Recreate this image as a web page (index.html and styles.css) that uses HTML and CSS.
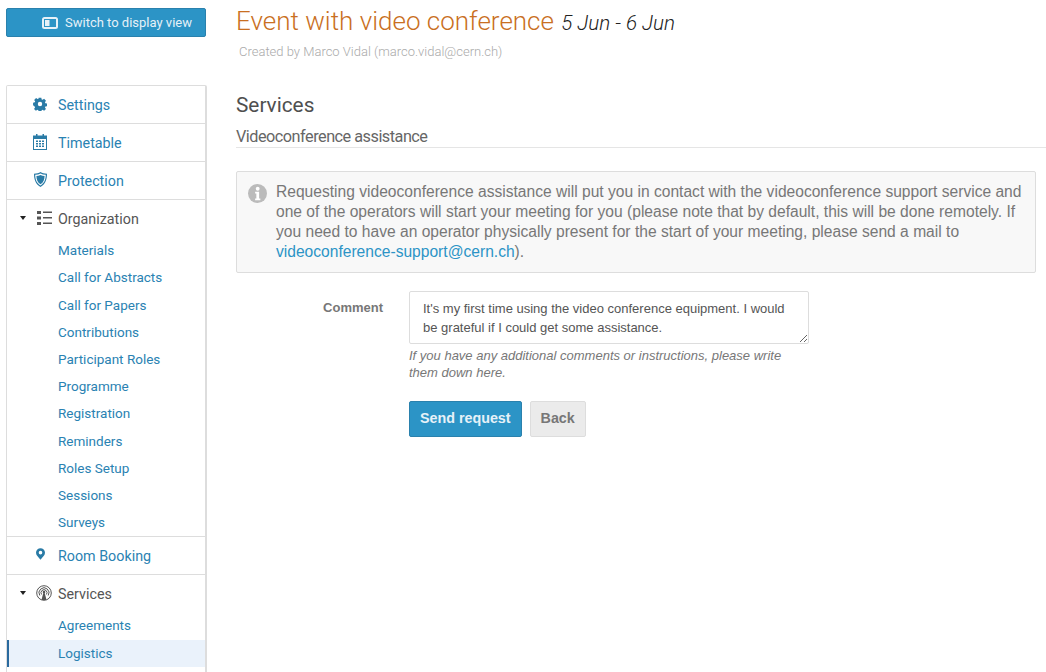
FILE: index.html
```html
<!DOCTYPE html>
<html lang="en">
<head>
<meta charset="utf-8">
<title>Services</title>
<link rel="stylesheet" href="styles.css">
</head>
<body>
<div class="page">
  <aside class="side">
    <a class="switch" href="#">
      <svg class="switch-ico" viewBox="0 0 16 12" width="16" height="12"><rect x="0" y="0" width="16" height="12" rx="2.5" fill="#e6f1f8"/><rect x="2" y="2" width="12" height="8" fill="#2c94c6"/><rect x="3" y="3" width="4.5" height="6" fill="#e6f1f8"/></svg>
      <span>Switch to display view</span>
    </a>
    <nav class="menu">
      <div class="item">
        <svg class="ico ico-gear" viewBox="0 0 16 16" width="14" height="14"><path fill="#2a7ba6" fill-rule="evenodd" d="M6.300 0h3.400l.4 2.200 1.200.5 1.900-1.300 2.400 2.400-1.300 1.900.5 1.200 2.200.4v3.400l-2.200.4-.5 1.200 1.300 1.900-2.400 2.400-1.900-1.300-1.200.5-.4 2.200H6.300l-.4-2.200-1.200-.5-1.900 1.300-2.400-2.400 1.300-1.900-.5-1.200L-.8 9.700V6.300L1.400 5.900l.5-1.200L.6 2.800 3 .4l1.900 1.300 1.200-.5zM8 5.200a2.800 2.800 0 1 0 0 5.600 2.800 2.800 0 0 0 0-5.600z" transform="translate(.8 .8) scale(.9)"/></svg>
        <span>Settings</span>
      </div>
      <div class="item">
        <svg class="ico ico-cal" viewBox="0 0 14 16" width="14" height="16"><path fill="#2a7ba6" d="M0 1.500h14V16H0z"/><path fill="#2a7ba6" d="M3 0h1.500v2H3zM9.500 0H11v2H9.500z"/><path fill="#fff" d="M1 5h12v10H1z"/><path fill="#2a7ba6" d="M3 6.500h2v1.500H3zM6 6.500h2v1.500H6zM9 6.500h2v1.500H9zM3 9h2v1.500H3zM6 9h2v1.500H6zM9 9h2v1.500H9zM3 11.500h2V13H3zM6 11.500h2V13H6zM9 11.500h2V13H9z"/></svg>
        <span>Timetable</span>
      </div>
      <div class="item">
        <svg class="ico ico-shield" viewBox="0 0 14 16" width="13" height="15"><path fill="#2a7ba6" fill-rule="evenodd" d="M7 0c2 1.200 4 1.700 7 1.800 0 6-1.500 11-7 14.200C1.500 12.800 0 7.800 0 1.800 3 1.700 5 1.200 7 0zm0 1.500C5.300 2.400 3.500 2.900 1.300 3c.1 5 1.400 8.800 5.700 11.500 4.300-2.700 5.600-6.500 5.700-11.500-2.200-.1-4-.6-5.700-1.500z"/><path fill="#2a7ba6" d="M7 3.200c1.400.6 2.800 1 4.400 1.100-.1 4-1.100 6.900-4.400 8.900-3.300-2-4.300-4.900-4.400-8.900C4.200 4.200 5.600 3.800 7 3.200z"/></svg>
        <span>Protection</span>
      </div>
      <div class="group">
        <div class="item open">
          <span class="caret"></span>
          <svg class="ico ico-list" viewBox="0 0 15 14" width="15" height="14"><path fill="#555" d="M0 0h4v3H0zM0 5.500h4v3H0zM0 11h4v3H0zM6 .5h9V2H6zM6 6h9v1.500H6zM6 11.500h9V13H6z"/></svg>
          <span>Organization</span>
        </div>
        <ul class="subs">
          <li>Materials</li>
          <li>Call for Abstracts</li>
          <li>Call for Papers</li>
          <li>Contributions</li>
          <li>Participant Roles</li>
          <li>Programme</li>
          <li>Registration</li>
          <li>Reminders</li>
          <li>Roles Setup</li>
          <li>Sessions</li>
          <li>Surveys</li>
        </ul>
      </div>
      <div class="item">
        <svg class="ico ico-pin" viewBox="0 0 10 13" width="9" height="12"><path fill="#2a7ba6" fill-rule="evenodd" d="M5 0a5 5 0 0 1 5 5c0 3-3 5-5 8C3 10 0 8 0 5a5 5 0 0 1 5-5zm0 3a2 2 0 1 0 0 4 2 2 0 0 0 0-4z"/></svg>
        <span>Room Booking</span>
      </div>
      <div class="group">
        <div class="item open">
          <span class="caret"></span>
          <svg class="ico ico-radio" viewBox="0 0 16 16" width="16" height="16"><g fill="none" stroke="#555" stroke-width="1"><circle cx="8" cy="8" r="7.300"/><path d="M3.800 10.500a5 5 0 1 1 8.400 0"/><path d="M5.600 9.500a3 3 0 1 1 4.800 0"/></g><circle cx="8" cy="7" r="1.300" fill="#555"/><path fill="#555" d="M7.300 8h1.400l1.800 7h-5z"/></svg>
          <span>Services</span>
        </div>
        <ul class="subs subs-services">
          <li>Agreements</li>
          <li class="active">Logistics</li>
        </ul>
      </div>
    </nav>
  </aside>
  <main class="main">
    <header class="head">
      <h1 class="title">Event with video conference <span class="dates">5 Jun - 6 Jun</span></h1>
      <p class="creator">Created by Marco Vidal (marco.vidal@cern.ch)</p>
    </header>
    <section class="section-head">
      <h2>Services</h2>
      <h3>Videoconference assistance</h3>
    </section>
    <div class="info">
      <svg class="info-ico" viewBox="0 0 20 20" width="19" height="19"><circle cx="10" cy="10" r="10" fill="#bbb"/><circle cx="10.200" cy="5" r="2" fill="#fff"/><path fill="#fff" d="M7.500 8.200h4.200v7H13V17H7.500v-1.800h1.300V10H7.500z"/></svg>
      <p>Requesting videoconference assistance will put you in contact with the videoconference support service and one of the operators will start your meeting for you (please note that by default, this will be done remotely. If you need to have an operator physically present for the start of your meeting, please send a mail to <a href="#">videoconference-support@cern.ch</a>).</p>
    </div>
    <form class="form">
      <label class="label" for="comment">Comment</label>
      <div class="field">
        <textarea id="comment" class="area">It's my first time using the video conference equipment. I would be grateful if I could get some assistance.</textarea>
        <p class="hint">If you have any additional comments or instructions, please write them down here.</p>
        <div class="buttons">
          <button type="button" class="btn primary">Send request</button>
          <button type="button" class="btn">Back</button>
        </div>
      </div>
    </form>
  </main>
</div>
</body>
</html>
```
FILE: styles.css
```css
* { box-sizing: border-box; }
html, body { margin: 0; height: 672px; overflow: hidden; background: #fff; }
body { font-family: "Liberation Sans", Arial, sans-serif; color: #555; }
.page { display: flex; height: 672px; overflow: hidden; }

.side { width: 206px; margin-left: 6px; flex: none; padding-top: 8px; }
.switch {
  display: flex; align-items: center; width: 200px; height: 29px; padding-left: 35px; gap: 7px;
  background: #2c94c6; border: 1px solid #2a81ad; border-radius: 2px;
  color: #e6f1f8; font: 13px/1 Roboto, sans-serif; text-decoration: none;
}
.switch-ico { flex: none; }

.menu {
  margin-top: 48px; width: 201px; background: #fff;
  border: 1px solid #ddd; border-right-width: 2px; border-bottom: 0; border-radius: 2px 2px 0 0;
  font-family: Roboto, sans-serif;
}
.item {
  position: relative; display: flex; align-items: center; height: 37px;
  padding-left: 51px; font-size: 14.300px; color: #2a82b2;
}
.menu > .item, .menu > .group { border-bottom: 1px solid #ddd; height: 38px; }
.menu > .group { height: auto; }
.menu > .group:last-child { border-bottom: 0; }
.item.open { color: #555; height: 37px; }
.ico { position: absolute; }
.ico-gear { left: 26px; top: 11px; }
.ico-cal { left: 26px; top: 10px; }
.ico-shield { left: 27px; top: 10px; }
.ico-list { left: 30px; top: 11px; }
.ico-pin { left: 29px; top: 11px; }
.ico-radio { left: 29px; top: 10px; }
.caret {
  position: absolute; left: 13px; top: 16px; width: 0; height: 0;
  border-left: 3.500px solid transparent; border-right: 3.500px solid transparent; border-top: 4px solid #222;
}
.subs { list-style: none; margin: 0; padding: .2px 0 0; }
.subs li {
  height: 27.200px; line-height: 27.200px; padding-left: 51px;
  font-size: 13.500px; color: #2a82b2;
}
.subs li.active { background: #eaf2fb; border-left: 2px solid #2a6a9e; padding-left: 49px; }
.subs-services { padding: 0 0 12px; }
.subs-services li:first-child { height: 27.700px; }

.main { flex: 1; min-width: 0; padding-left: 24px; }
.head { height: 85px; }
.title {
  margin: 0; padding-top: 6px; font: 300 26px/30px Roboto, sans-serif; color: #c96f22; white-space: nowrap;
}
.dates { font-size: 20.600px; font-style: italic; color: #222; margin-left: 1px; }
.creator { margin: 6px 0 0 3px; font: 300 13px/16px Roboto, sans-serif; color: #aaa; }

.section-head { border-bottom: 1px solid #e5e5e5; height: 63px; }
.section-head h2 { margin: 0; padding-top: 8px; font: 400 20.800px/24px Roboto, sans-serif; color: #4f4f4f; }
.section-head h3 { margin: 10px 0 0; font: 400 16.250px/20px Roboto, sans-serif; color: #666; letter-spacing: -.5px; }

.info {
  display: flex; gap: 9px; margin-top: 23px; width: 800px; height: 102px; padding: 10px 8px 0 11px;
  background: #f8f8f8; border: 1px solid #ddd; border-radius: 2px;
}
.info-ico { flex: none; margin-top: 2px; }
.info p { margin: 0; font-size: 15.600px; line-height: 20px; color: #777; }
.info a { color: #2c94c6; text-decoration: none; }

.form { display: flex; margin-top: 18px; }
.label { width: 147px; text-align: right; font-weight: 700; font-size: 13px; line-height: 18px; margin-top: 8px; color: #777; }
.field { margin-left: 26px; width: 400px; }
.area {
  display: block; width: 400px; height: 53px; padding: 7px 13px 0; resize: vertical;
  border: 1px solid #ddd; border-radius: 2px; background: #fff;
  font: 13px/19px "Liberation Sans", Arial, sans-serif; color: #555; overflow: hidden; outline: 0;
}
.hint { margin: 3px 0 0; font-size: 13px; line-height: 17px; font-style: italic; color: #777; }
.buttons { display: flex; gap: 8px; margin-top: 20px; }
.btn {
  height: 36px; padding: 0 10px 2px; border: 1px solid #ddd; border-radius: 2px; background: #ebebeb;
  font: 700 14.300px "Liberation Sans", Arial, sans-serif; color: #777;
}
.btn.primary { background: #2c94c6; border-color: #2a81ad; color: #e6f1f8; }
```
